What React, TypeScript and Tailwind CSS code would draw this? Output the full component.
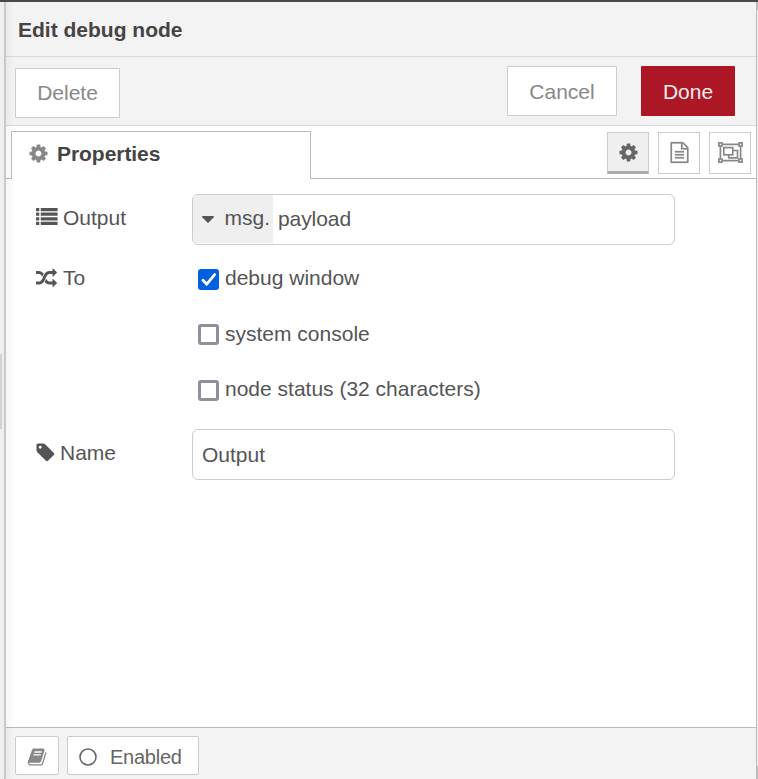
import React from "react";

const COG =
  "M1152 896q0-106-75-181t-181-75-181 75-75 181 75 181 181 75 181-75 75-181zm512-109v222q0 12-8 23t-20 13l-185 28q-19 54-39 91 35 50 107 138 10 12 10 25t-9 23q-27 37-99 108t-94 71q-12 0-26-9l-138-108q-44 23-91 38-16 136-29 186-7 28-36 28h-222q-14 0-24.5-8.5t-11.5-21.5l-28-184q-49-16-90-37l-141 107q-10 9-25 9-14 0-25-11-126-114-165-168-7-10-7-23 0-12 8-23 15-21 51-66.5t54-70.5q-27-50-41-99l-183-27q-13-2-21-12.5t-8-23.5v-222q0-12 8-23t19-13l186-28q14-46 39-92-40-57-107-138-10-12-10-24 0-10 9-23 26-36 98.5-107.5t94.5-71.5q13 0 26 10l138 107q44-23 91-38 16-136 29-186 7-28 36-28h222q14 0 24.5 8.5t11.5 21.5l28 184q49 16 90 37l142-107q9-9 24-9 13 0 25 10 129 119 165 170 7 8 7 22 0 12-8 23-15 21-51 66.5t-54 70.5q26 50 41 98l183 28q13 2 21 12.5t8 23.5z";
const FILE_TEXT =
  "M1596 380q28 28 48 76t20 88v1152q0 40-28 68t-68 28h-1344q-40 0-68-28t-28-68v-1600q0-40 28-68t68-28h896q40 0 88 20t76 48zm-444-244v376h376q-10-29-22-41l-313-313q-12-12-41-22zm384 1528v-1024h-416q-40 0-68-28t-28-68v-416h-768v1536h1280zm-1024-864q0-14 9-23t23-9h704q14 0 23 9t9 23v64q0 14-9 23t-23 9h-704q-14 0-23-9t-9-23v-64zm736 224q14 0 23 9t9 23v64q0 14-9 23t-23 9h-704q-14 0-23-9t-9-23v-64q0-14 9-23t23-9h704zm0 256q14 0 23 9t9 23v64q0 14-9 23t-23 9h-704q-14 0-23-9t-9-23v-64q0-14 9-23t23-9h704z";
const RANDOM =
  "M666 481q-60 92-137 273-22-45-37-72.5t-40.5-63.5-51-56.5-63-35-81.5-14.5h-224q-14 0-23-9t-9-23v-192q0-14 9-23t23-9h224q250 0 410 225zm1126 799q0 14-9 23l-320 320q-9 9-23 9-13 0-22.5-9.5t-9.5-22.5v-192q-32 0-85 .5t-81 1-73-1-71-5-64-10.5-63-18.5-58-28.5-59-40-55-53.5-56-69.5q59-93 136-273 22 45 37 72.5t40.5 63.5 51 56.5 63 35 81.5 14.5h256v-192q0-14 9-23t23-9q12 0 24 10l319 319q9 9 9 23zm0-896q0 14-9 23l-320 320q-9 9-23 9-13 0-22.5-9.5t-9.5-22.5v-192h-256q-48 0-87 15t-69 45-51 61.5-45 77.5q-32 62-78 171-29 66-49.5 111t-54 105-64 100-74 83-90 68.5-106.5 42-128 16.5h-224q-14 0-23-9t-9-23v-192q0-14 9-23t23-9h224q48 0 87-15t69-45 51-61.5 45-77.5q32-62 78-171 29-66 49.5-111t54-105 64-100 74-83 90-68.5 106.5-42 128-16.5h256v-192q0-14 9-23t23-9q12 0 24 10l319 319q9 9 9 23z";
const TAG =
  "M576 448q0-53-37.5-90.5t-90.5-37.5-90.5 37.5-37.5 90.5 37.5 90.5 90.5 37.5 90.5-37.5 37.5-90.5zm1067 576q0 53-37 90l-491 492q-39 37-91 37-53 0-90-37l-715-716q-38-37-64.5-101t-26.5-117v-416q0-52 38-90t90-38h416q53 0 117 26.5t102 64.5l715 714q37 39 37 91z";
const BOOK =
  "M1703 478q40 57 18 129l-275 906q-19 64-76.5 107.5t-122.5 43.5h-923q-77 0-148.5-53.5t-99.5-131.5q-24-67-2-127 0-4 3-27t4-37q1-8-3-21.5t-3-19.5q2-11 8-21t16.5-23.5 16.5-23.5q23-38 45-91.5t30-91.5q3-10 .5-30t-.5-28q3-11 17-28t17-23q21-36 42-92t25-90q1-9-2.5-32t.5-28q4-13 22-30.5t22-22.5q19-26 42.5-84.5t27.5-96.5q1-8-3-25.5t-2-26.5q2-8 9-18t18-23 17-21q8-12 16.5-30.5t15-35 16-36 19.5-32 26.5-23.5 36-11.5 47.5 5.5l-1 3q38-9 51-9h761q74 0 114 56t18 130l-274 906q-36 119-71.5 153.5t-128.5 34.5h-869q-27 0-38 15-11 16-1 43 24 70 144 70h923q29 0 56-15.5t35-41.5l300-987q7-22 5-57 38 15 59 43zm-1064 2q-4 13 2 22.5t20 9.5h608q13 0 25.5-9.5t16.5-22.5l21-64q4-13-2-22.5t-20-9.5h-608q-13 0-25.5 9.5t-16.5 22.5zm-83 256q-4 13 2 22.5t20 9.5h608q13 0 25.5-9.5t16.5-22.5l21-64q4-13-2-22.5t-20-9.5h-608q-13 0-25.5 9.5t-16.5 22.5z";

function Glyph({ d, className }: { d: string; className: string }) {
  return (
    <svg viewBox="0 0 1792 1792" fill="currentColor" className={`shrink-0 overflow-visible ${className}`}>
      <path d={d} />
    </svg>
  );
}

function ListIcon() {
  return (
    <svg viewBox="0 0 22 17" fill="currentColor" className="h-[17px] w-[22px] shrink-0">
      {[0, 4.6, 9.2, 13.7].map((y) => (
        <g key={y}>
          <rect x="0" y={y} width="3.3" height="3.2" rx="0.4" />
          <rect x="4.7" y={y} width="16.9" height="3.2" rx="0.4" />
        </g>
      ))}
    </svg>
  );
}

function GroupIcon() {
  return (
    <svg viewBox="0 0 25 21" fill="none" stroke="currentColor" strokeWidth="1.7" className="h-[21px] w-[25px] shrink-0">
      <path d="M4.5 2.4h16M4.5 18.6h16M2.4 4.5v12M22.6 4.5v12" />
      <rect x="0.9" y="0.9" width="3.1" height="3.1" />
      <rect x="21" y="0.9" width="3.1" height="3.1" />
      <rect x="0.9" y="17" width="3.1" height="3.1" />
      <rect x="21" y="17" width="3.1" height="3.1" />
      <rect x="5.8" y="5.6" width="9" height="7.2" />
      <path d="M14.8 8.5h4.7v7.3h-8.8v-3" />
    </svg>
  );
}

function Checkbox({ checked, label, className }: { checked?: boolean; label: string; className: string }) {
  return (
    <label className={`flex items-start ${className}`}>
      {checked ? (
        <span className="mt-[3px] flex h-[21px] w-[21px] items-center justify-center rounded-[3px] bg-[#0060df]">
          <svg viewBox="0 0 21 21" fill="none" stroke="#fff" strokeWidth="2.8" strokeLinecap="round" strokeLinejoin="round" className="h-[21px] w-[21px]">
            <path d="M5 11.2l3.8 4L16.6 5.6" />
          </svg>
        </span>
      ) : (
        <span className="mt-[3px] h-[21px] w-[21px] rounded-[3px] border-3 border-[#8f8f9d] bg-white" />
      )}
      <span className="ml-1.5 leading-6">{label}</span>
    </label>
  );
}

export default function App() {
  return (
    <div className="flex h-[779px] w-[758px] overflow-hidden bg-[#f3f3f3] font-['Liberation_Sans',Arial,sans-serif] text-[21px] leading-6 text-[#555]">
      <div className="flex h-full w-full flex-col">
        <div className="h-0.5 shrink-0 bg-[#4b4848]" />
        <div className="flex min-h-0 flex-1">
          <div className="flex w-1 shrink-0 flex-col bg-[#efefef]">
            <div className="mt-[352px] h-[75px] w-0.5 bg-[#d2d2d2]" />
          </div>
          <div className="w-0.5 shrink-0 bg-linear-to-r from-[#c2c2c2] to-[#cfcfcf]" />
          <div className="relative flex w-[750px] shrink-0 flex-col bg-white">
            <header className="flex h-[55px] shrink-0 items-center border-b border-[#d9d9d9] bg-[#f3f3f3] pl-3 pt-0.5 text-[#444]">
              <h1 className="font-bold">Edit debug node</h1>
            </header>

            <div className="flex h-[69px] shrink-0 items-start border-b border-[#d9d9d9] bg-[#f3f3f3] pl-[9px] pr-[21px] text-[#888]">
              <button className="mt-[11px] h-[50px] w-[105px] rounded-[1px] border border-[#ccc] bg-white">Delete</button>
              <button className="ml-auto mt-[9px] h-[50px] w-[110px] rounded-[1px] border border-[#ccc] bg-white pt-0.5">Cancel</button>
              <button className="ml-6 mt-[9px] h-[50px] w-[94px] rounded-[1px] bg-[#ad1625] pt-0.5 text-[#eee]">Done</button>
            </div>

            <div className="flex h-[53px] shrink-0">
              <div className="w-[5px] border-b border-[#bbb]" />
              <div className="mt-[5px] flex w-[300px] items-start border border-b-0 border-[#bbb] pl-4 pt-[10px]">
                <Glyph d={COG} className="mt-[1px] h-[21px] w-[21px] text-[#888]" />
                <span className="ml-2 font-bold tracking-[-0.05px] text-[#444]">Properties</span>
              </div>
              <div className="flex flex-1 justify-end gap-[9px] border-b border-[#bbb] pr-[5px] pt-1.5 text-[#888]">
                <button className="flex h-[42px] w-[42px] items-center justify-center border border-b-3 border-[#ccc] border-b-[#aaa] bg-[#efefef] text-[#666]">
                  <Glyph d={COG} className="h-[21px] w-[21px]" />
                </button>
                <button className="flex h-[42px] w-[42px] items-center justify-center border border-[#ccc] pb-[2px]">
                  <Glyph d={FILE_TEXT} className="h-[21px] w-[21px] stroke-current stroke-[20]" />
                </button>
                <button className="flex h-[42px] w-[42px] items-center justify-center border border-[#ccc] pb-[2px]">
                  <GroupIcon />
                </button>
              </div>
            </div>

            <main className="flex-1 pl-[30px]">
              <div className="flex pt-[15px]">
                <div className="flex w-[156px] items-start pt-3">
                  <span className="mt-[2px]"><ListIcon /></span>
                  <span className="ml-[5px]">Output</span>
                </div>
                <div className="flex h-[51px] w-[483px] overflow-hidden rounded-[6px] border border-[#ccc] bg-white">
                  <div className="mb-px flex w-20 items-start bg-[#efefef] pl-[9px] pt-[11px]">
                    <svg viewBox="0 0 12 7" fill="currentColor" className="mt-[10px] h-[7px] w-3">
                      <path d="M.7 0h10.6q1 .3.4 1.2L6.7 6.5q-.7.7-1.4 0L.3 1.2Q-.3.3.7 0z" />
                    </svg>
                    <span className="ml-[10.5px]">msg.</span>
                  </div>
                  <span className="ml-[5px] pt-3 tracking-[-0.08px]">payload</span>
                </div>
              </div>

              <div className="flex pt-[21px]">
                <div className="flex w-[162px] items-start">
                  <Glyph d={RANDOM} className="mt-[1.5px] h-[21px] w-[21px]" />
                  <span className="ml-1.5">To</span>
                </div>
                <div className="flex flex-col">
                  <Checkbox checked label="debug window" className="h-[55px]" />
                  <Checkbox label="system console" className="h-[56px] [&>span:last-child]:pt-px" />
                  <Checkbox label="node status (32 characters)" className="h-[52px]" />
                </div>
              </div>

              <div className="flex">
                <div className="flex w-[156px] items-start pt-3">
                  <Glyph d={TAG} className="-ml-[1.5px] mt-px h-[21px] w-[21px]" />
                  <span className="ml-[4.5px]">Name</span>
                </div>
                <div className="h-[51px] w-[483px] rounded-[6px] border border-[#ccc] bg-white pl-[9px] pt-[13px]">Output</div>
              </div>
            </main>

            <footer className="flex h-[52px] shrink-0 gap-2 border-t border-[#bbb] bg-[#f3f3f3] pl-[9px] pt-2 text-[#666]">
              <button className="flex h-[39px] w-11 items-center justify-center rounded-[2px] border border-[#ccc] bg-white pt-[2px] text-[#888]">
                <Glyph d={BOOK} className="h-5 w-5" />
              </button>
              <button className="flex h-[39px] w-[132px] items-center rounded-[2px] border border-[#ccc] bg-white pl-[11px] pt-[2px] text-[20px]">
                <svg viewBox="0 0 18 18" fill="none" stroke="currentColor" strokeWidth="1.6" className="h-[18px] w-[18px]">
                  <circle cx="9" cy="9" r="8" />
                </svg>
                <span className="ml-[13px] tracking-[-0.25px]">Enabled</span>
              </button>
            </footer>
            <div className="pointer-events-none absolute inset-y-0 left-0 w-2 bg-linear-to-r from-black/4 to-transparent" />
          </div>
          <div className="w-px shrink-0 bg-[#bbb]" />
          <div className="flex w-px shrink-0 flex-col justify-between bg-[#efefef]">
            <div className="h-2 bg-[#bbb]" />
            <div className="h-[13px] bg-[#bbb]" />
          </div>
        </div>
      </div>
    </div>
  );
}
